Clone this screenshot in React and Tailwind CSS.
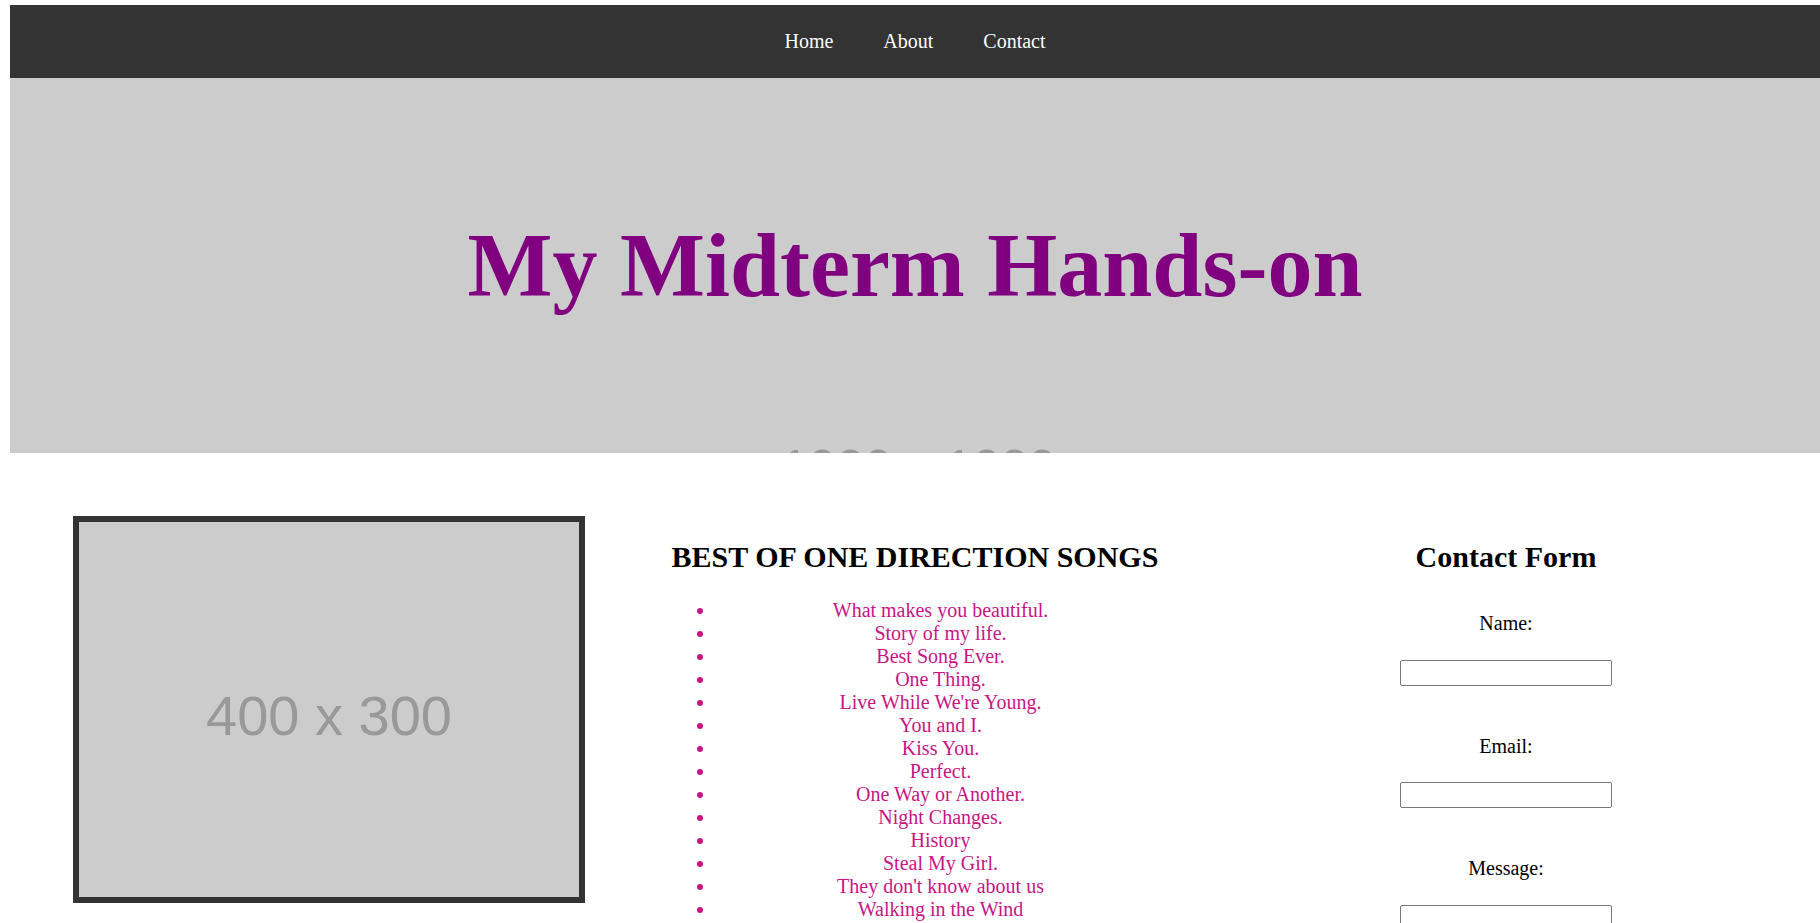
import React from "react";

const songs = [
  "What makes you beautiful.",
  "Story of my life.",
  "Best Song Ever.",
  "One Thing.",
  "Live While We're Young.",
  "You and I.",
  "Kiss You.",
  "Perfect.",
  "One Way or Another.",
  "Night Changes.",
  "History",
  "Steal My Girl.",
  "They don't know about us",
  "Walking in the Wind",
];

export default function App() {
  return (
    <div className="min-h-screen w-[1820px] overflow-hidden bg-white pl-[10px] pt-[5px] font-['Liberation_Serif',serif] text-black">
      <nav className="flex h-[73px] w-full items-center justify-center gap-[50px] bg-[#333333] text-[20px] leading-[normal] text-white">
        <a href="#home">Home</a>
        <a href="#about">About</a>
        <a href="#contact">Contact</a>
      </nav>

      <header className="relative flex h-[375px] w-full items-center justify-center overflow-hidden bg-[#cccccc]">
        <div className="absolute left-0 right-0 top-[365px] pl-[7px] text-center font-['Liberation_Sans',sans-serif] text-[50px] leading-none text-[#999999]">
          1920 x 1080
        </div>
        <h1 className="relative text-[90px] font-bold leading-[normal] text-[#800080]">
          My Midterm Hands-on
        </h1>
      </header>

      <main className="flex pt-[62px]">
        <section className="w-[605px] shrink-0">
          <div className="ml-[63px] mt-[1px] w-[512px] border-[6px] border-[#333333] bg-[#cccccc]">
            <div className="flex h-[375px] w-[500px] items-center justify-center pt-[11px] font-['Liberation_Sans',sans-serif] text-[56px] leading-[normal] text-[#999999]">
              400 x 300
            </div>
          </div>
        </section>

        <section className="w-[600px] shrink-0">
          <h2 className="mt-[25px] text-center text-[30px] font-bold leading-[normal]">
            BEST OF ONE DIRECTION SONGS
          </h2>
          <ul className="ml-[61px] mt-[25px] w-[489px] list-outside list-disc pl-[40px] text-[20px] leading-[normal] text-[#c71585]">
            {songs.map((s) => (
              <li key={s} className="text-center">
                {s}
              </li>
            ))}
          </ul>
        </section>

        <section className="flex w-[582px] shrink-0 flex-col items-center">
          <h2 className="mt-[25px] text-center text-[30px] font-bold leading-[normal]">
            Contact Form
          </h2>
          <form className="flex flex-col items-center text-[20px] leading-[normal]">
            <label className="mt-[38px]" htmlFor="name">Name:</label>
            <input
              id="name"
              type="text"
              className="mt-[25px] h-[26px] w-[212px] rounded-[2px] border border-[#767676] bg-white"
            />
            <label className="mt-[49px]" htmlFor="email">Email:</label>
            <input
              id="email"
              type="email"
              className="mt-[24px] h-[26px] w-[212px] rounded-[2px] border border-[#767676] bg-white"
            />
            <label className="mt-[49px]" htmlFor="message">Message:</label>
            <textarea
              id="message"
              className="mt-[25px] h-[60px] w-[212px] resize-none rounded-[2px] border border-[#767676] bg-white"
            />
          </form>
        </section>
      </main>
    </div>
  );
}
